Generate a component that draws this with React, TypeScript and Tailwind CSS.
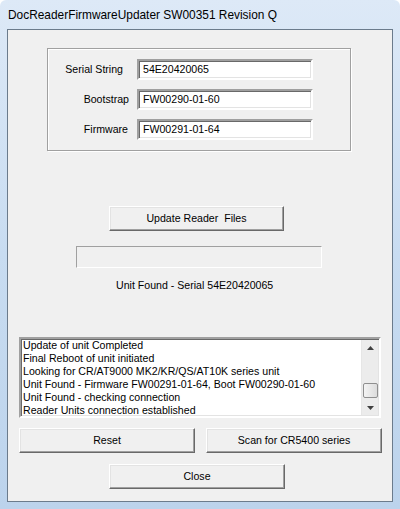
import React from "react";

const btn =
  "flex items-center justify-center h-[25px] bg-[#f0f0f0] border border-t-white border-l-white border-r-[#696969] border-b-[#696969] shadow-[inset_-1px_-1px_0_#a0a0a0,inset_1px_1px_0_#e3e3e3] whitespace-pre";

const textbox =
  "w-[176px] h-[21px] bg-white border-2 border-t-[#a0a0a0] border-l-[#a0a0a0] border-r-white border-b-white shadow-[inset_1px_1px_0_#696969,inset_-1px_-1px_0_#e3e3e3] pl-[4px] flex items-center";

function Arrow({ up }: { up?: boolean }) {
  return (
    <svg width="7" height="4" viewBox="0 0 7 4">
      {up ? <polygon points="0,4 7,4 3.5,0" fill="#404040" /> : <polygon points="0,0 7,0 3.5,4" fill="#404040" />}
    </svg>
  );
}

export default function App() {
  const lines = [
    "Update of unit Completed",
    "Final Reboot of unit initiated",
    "Looking for CR/AT9000 MK2/KR/QS/AT10K series unit",
    "Unit Found - Firmware FW00291-01-64, Boot FW00290-01-60",
    "Unit Found - checking connection",
    "Reader Units connection established",
  ];
  return (
    <div className="w-[400px] h-[509px] relative overflow-hidden bg-gradient-to-b from-[#dde9f7] via-[#c8dcf1] to-[#bcd3ec] rounded-t-[6px] font-['Liberation_Sans',Arial,sans-serif] text-[10.6px] text-black">
      <div className="h-[29px] pl-[8px] pt-[8px] text-[11.9px] leading-[14px]">
        DocReaderFirmwareUpdater SW00351 Revision Q
      </div>
      <div className="mx-[7px] h-[473px] border border-[#6b7b8c] bg-[#f0f0f0] flex flex-col items-start">
        {/* Group box */}
        <div className="ml-[39px] mt-[18px] w-[304px] h-[103px] border border-[#a0a0a0] shadow-[inset_1px_1px_0_#ffffff,1px_1px_0_#ffffff] pt-[10px] flex flex-col gap-[9px]">
          {[
            ["Serial String", "54E20420065", "pr-[6px]"],
            ["Bootstrap", "FW00290-01-60", ""],
            ["Firmware", "FW00291-01-64", "pr-[1px]"],
          ].map(([label, value, pr]) => (
            <div key={label} className="flex items-center">
              <div className={`w-[81px] mr-[8px] text-right ${pr}`}>{label}</div>
              <div className={textbox}>{value}</div>
            </div>
          ))}
        </div>

        <div className={`${btn} ml-[101px] mt-[55px] w-[175px]`}>Update Reader  Files</div>

        <div className="ml-[68px] mt-[15px] w-[246px] h-[22px] border border-t-[#a0a0a0] border-l-[#a0a0a0] border-r-white border-b-white bg-[#f0f0f0]" />

        <div className="ml-[108px] mt-[11px] leading-[13px]">Unit Found - Serial 54E20420065</div>

        {/* List box */}
        <div className="ml-[11px] mt-[45px] w-[362px] h-[81px] bg-white border-2 border-t-[#a0a0a0] border-l-[#a0a0a0] border-r-white border-b-white shadow-[inset_1px_1px_0_#696969,inset_-1px_-1px_0_#e3e3e3] flex overflow-hidden">
          <div className="flex-1 pl-[2px] leading-[13px] overflow-hidden whitespace-nowrap">
            {lines.map((l) => (
              <div key={l}>{l}</div>
            ))}
          </div>
          <div className="w-[17px] my-[1px] mr-[1px] bg-[#ececec] border-l border-[#e6e6e6] flex flex-col items-center">
            <div className="h-[16px] w-full flex items-center justify-center">
              <Arrow up />
            </div>
            <div className="flex-1" />
            <div className="w-[15px] h-[15px] rounded-[2px] border border-[#8f8f8f] bg-gradient-to-r from-[#f4f4f4] to-[#dcdcdc] mb-[3px]" />
            <div className="h-[14px] w-full flex items-center justify-center">
              <Arrow />
            </div>
          </div>
        </div>

        <div className="ml-[11px] mt-[10px] flex gap-[11px]">
          <div className={`${btn} w-[176px]`}>Reset</div>
          <div className={`${btn} w-[176px]`}>Scan for CR5400 series</div>
        </div>

        <div className={`${btn} ml-[101px] mt-[11px] w-[176px]`}>Close</div>
      </div>
    </div>
  );
}
